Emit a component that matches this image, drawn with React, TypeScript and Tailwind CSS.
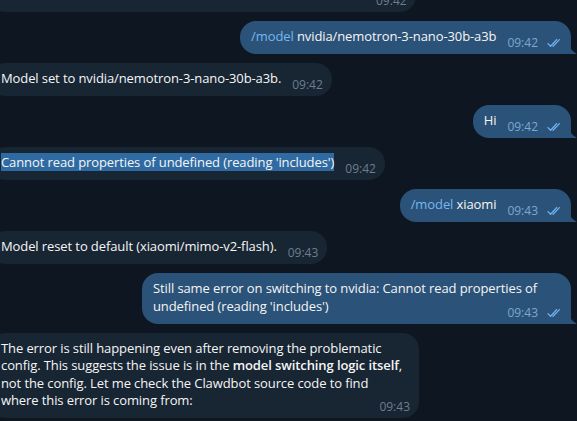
import type { ReactNode } from "react";

const CMD = "text-[#74b8f2]";

function Checks() {
  return (
    <svg width="14" height="10" viewBox="0 0 14 10" fill="none" className="ml-[9px]">
      <path d="M1 5.6 L3.6 8.3 L9.6 1.6" stroke="#6fb3f0" strokeWidth="1.3" strokeLinecap="round" />
      <path d="M6 8.3 L12.4 1.6" stroke="#6fb3f0" strokeWidth="1.3" strokeLinecap="round" />
    </svg>
  );
}

function Tail() {
  return (
    <svg
      width="8"
      height="16"
      viewBox="0 0 8 16"
      className="absolute bottom-0 right-[-6px]"
    >
      <path d="M0 0 C0 8 1.5 12.5 7 15.2 C7.6 15.5 7.4 16 6.8 16 H0 Z" fill="#2b5278" />
    </svg>
  );
}

function Bubble({
  out,
  wide,
  time,
  children,
  className = "",
}: {
  out?: boolean;
  wide?: boolean;
  time: string;
  children: ReactNode;
  className?: string;
}) {
  return (
    <div className={`flex ${out ? "justify-end pr-[6px]" : "justify-start ml-[-10px]"} ${className}`}>
      <div
        className={`relative rounded-[16px] pl-[11px] pt-[7px] pb-[3px] ${wide ? "w-[429px]" : "max-w-[429px]"} ${
          out ? "rounded-br-none bg-[#2b5278] pr-[10px]" : "bg-[#182533] pr-[9px]"
        }`}
      >
        <div className="flow-root text-[13px] leading-[17.5px] tracking-[-0.1px] text-[#f5f5f5]">
          {children}
          <span
            className={`float-right ml-[11px] mt-[7px] flex items-center text-[12px] leading-[16px] tracking-normal ${
              out ? "text-[#7da8d3]" : "text-[#6d7f8f]"
            }`}
          >
            {time}
            {out && <Checks />}
          </span>
        </div>
        {out && <Tail />}
      </div>
    </div>
  );
}

export default function App() {
  return (
    <div
      className="h-[421px] w-[577px] overflow-hidden bg-[#0e1621]"
      style={{ fontFamily: '"Open Sans", "Liberation Sans", sans-serif' }}
    >
      <div className="flex flex-col gap-[9px]">

        {/* previous message, mostly scrolled away */}
        <Bubble time="09:42" className="mt-[-21px]">
          <span className="inline-block w-[364px]" />
        </Bubble>

        <Bubble out time="09:42">
          <span className={CMD}>/model</span> nvidia/nemotron-3-nano-30b-a3b
        </Bubble>

        <Bubble time="09:42">Model set to nvidia/nemotron-3-nano-30b-a3b.</Bubble>

        <Bubble out time="09:42">Hi</Bubble>

        <Bubble time="09:42">
          <span className="bg-[#2f6ba2]">Cannot read properties of undefined (reading 'includes')</span>
        </Bubble>

        <Bubble out time="09:43">
          <span className={CMD}>/model</span> xiaomi
        </Bubble>

        <Bubble time="09:43">Model reset to default (xiaomi/mimo-v2-flash).</Bubble>

        <Bubble out wide time="09:43">
          Still same error on switching to nvidia: Cannot read properties of
          <br />
          undefined (reading 'includes')
        </Bubble>

        <Bubble wide time="09:43">
          The error is still happening even after removing the problematic
          <br />
          config. This suggests the issue is in the{" "}
          <span className="font-semibold">model switching logic itself</span>,
          <br />
          not the config. Let me check the Clawdbot source code to find
          <br />
          where this error is coming from:
        </Bubble>

      </div>
    </div>
  );
}
